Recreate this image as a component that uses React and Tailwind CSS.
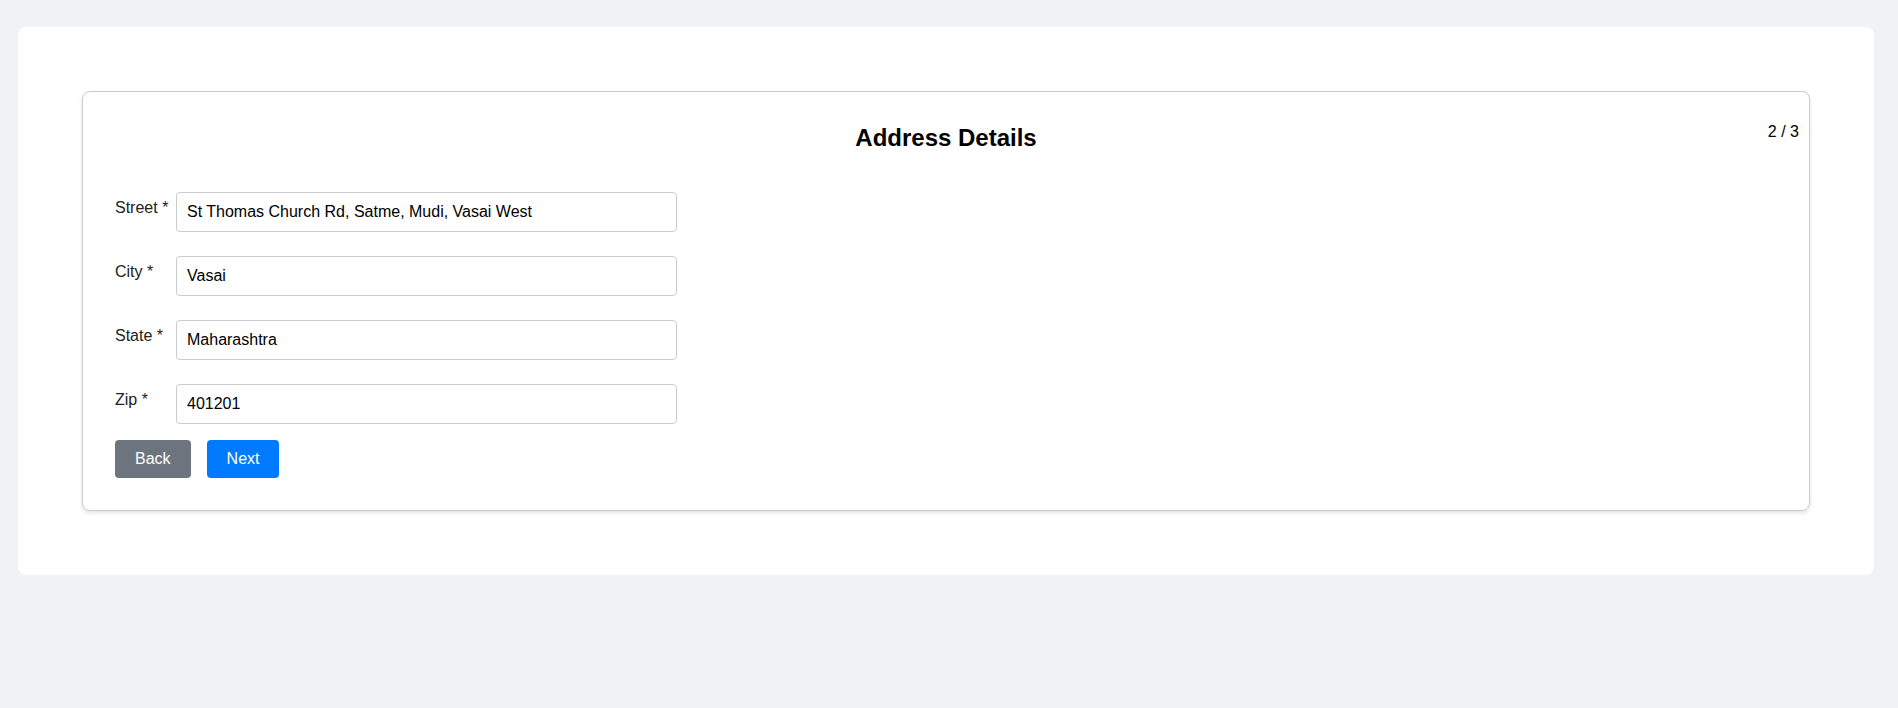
import { useState } from 'react';

const fields = [
  { key: 'street', label: 'Street *' },
  { key: 'city', label: 'City *' },
  { key: 'state', label: 'State *' },
  { key: 'zip', label: 'Zip *' },
];

export default function App() {
  const [form, setForm] = useState({
    street: 'St Thomas Church Rd, Satme, Mudi, Vasai West',
    city: 'Vasai',
    state: 'Maharashtra',
    zip: '401201',
  });

  function update(key, value) {
    setForm((prev) => ({ ...prev, [key]: value }));
  }

  return (
    <div className="min-h-screen bg-[#f0f2f5] pt-[27px] font-['Liberation_Sans',Arial,sans-serif] text-black">
      <div className="ml-[18px] mr-[24px] bg-white rounded-lg p-16">
        {/* Step card */}
        <div className="relative border border-[#cccccc] rounded-lg shadow-[0_2px_4px_rgba(0,0,0,0.12)] px-8 pt-[28px] pb-[32px]">
          <h2 className="text-center text-[24px] leading-[36px] font-bold mb-[36px]">Address Details</h2>
          <span className="absolute top-[28px] right-[10px] text-[16px] leading-[24px]">2 / 3</span>

          {fields.map((f, i) => (
            <div
              key={f.key}
              className={`flex items-start ${i === fields.length - 1 ? 'mb-4' : 'mb-6'}`}
            >
              <label className="w-[54px] mr-[7px] mt-[4px] shrink-0 text-[16px] leading-[24px] text-[#222] whitespace-nowrap">
                {f.label}
              </label>
              <input
                value={form[f.key]}
                onChange={(e) => update(f.key, e.target.value)}
                className="w-[501px] h-[40px] border border-[#cccccc] rounded-[4px] px-[10px] text-[16px] text-black outline-none"
              />
            </div>
          ))}

          <div className="flex gap-4">
            <button className="bg-[#6c757d] text-white text-[16px] leading-[24px] px-[20px] py-[7px] rounded-[4px]">
              Back
            </button>
            <button className="bg-[#007bff] text-white text-[16px] leading-[24px] px-[20px] py-[7px] rounded-[4px]">
              Next
            </button>
          </div>
        </div>
      </div>
    </div>
  );
}
